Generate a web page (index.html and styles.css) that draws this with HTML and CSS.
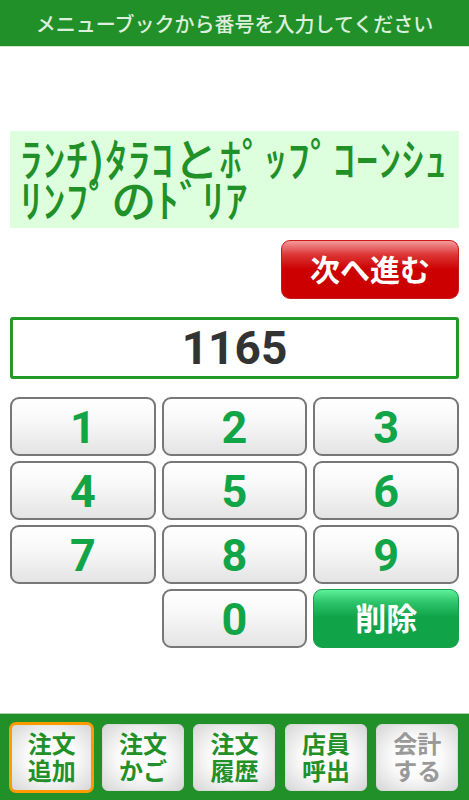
FILE: index.html
```html
<!DOCTYPE html>
<html lang="ja">
<head>
<meta charset="utf-8">
<link rel="stylesheet" href="styles.css">
</head>
<body>
<div class="app">
  <header class="header">メニューブックから番号を入力してください</header>
  <main class="main">
    <div class="item-name">ﾗﾝﾁ)ﾀﾗｺとﾎﾟｯﾌﾟｺｰﾝｼｭﾘﾝﾌﾟのﾄﾞﾘｱ</div>
    <div class="next-row"><button class="next-btn">次へ進む</button></div>
    <div class="number-box">1165</div>
    <div class="keypad">
      <button class="key">1</button>
      <button class="key">2</button>
      <button class="key">3</button>
      <button class="key">4</button>
      <button class="key">5</button>
      <button class="key">6</button>
      <button class="key">7</button>
      <button class="key">8</button>
      <button class="key">9</button>
      <span class="key-empty"></span>
      <button class="key">0</button>
      <button class="key key-delete">削除</button>
    </div>
  </main>
  <footer class="footer">
    <div class="tab-slot"><button class="tab tab-active"><span class="tab-line">注文</span><span class="tab-line">追加</span></button></div>
    <div class="tab-slot"><button class="tab"><span class="tab-line">注文</span><span class="tab-line">かご</span></button></div>
    <div class="tab-slot"><button class="tab"><span class="tab-line">注文</span><span class="tab-line">履歴</span></button></div>
    <div class="tab-slot"><button class="tab"><span class="tab-line">店員</span><span class="tab-line">呼出</span></button></div>
    <div class="tab-slot"><button class="tab tab-disabled"><span class="tab-line">会計</span><span class="tab-line">する</span></button></div>
  </footer>
</div>
</body>
</html>
```

FILE: styles.css
```css
* { box-sizing: border-box; }
html, body { margin: 0; padding: 0; }
body {
  font-family: "Noto Sans CJK JP", "Noto Sans", sans-serif;
  background: #fff;
  width: 469px;
  height: 800px;
  overflow: hidden;
}
button { font-family: inherit; padding: 0; margin: 0; cursor: pointer; }
.app {
  display: flex;
  flex-direction: column;
  height: 800px;
}
.header {
  height: 47px;
  background: #229028;
  border-bottom: 1px solid #cfe6cf;
  color: #dcefdc;
  font-size: 20px;
  font-weight: 500;
  display: flex;
  align-items: center;
  justify-content: center;
}
.main {
  flex: 1;
  padding: 84px 10px 0 10px;
}
.item-name {
  background: #ddffdd;
  color: #229028;
  font-size: 45px;
  font-weight: 500;
  letter-spacing: 0.4px;
  line-height: 41px;
  height: 97px;
  padding: 6px 4px 0 10px;
  word-break: break-all;
}
.next-row {
  display: flex;
  justify-content: flex-end;
  margin-top: 12px;
}
.next-btn {
  width: 178px;
  height: 59px;
  border: 1px solid #cc1a1a;
  border-radius: 9px;
  background: linear-gradient(to bottom, #f49a9a 0%, #dd3535 24%, #cc0000 50%, #cc0000 100%);
  color: #fff;
  font-size: 30px;
  font-weight: 700;
  line-height: 1;
  padding-bottom: 4px;
}
.number-box {
  margin-top: 18px;
  height: 62px;
  border: 3px solid #229a28;
  border-radius: 3px;
  display: flex;
  align-items: center;
  justify-content: center;
  font-family: Roboto, "Liberation Sans", sans-serif;
  font-weight: 700;
  font-size: 46px;
  color: #333;
}
.keypad {
  margin-top: 18px;
  display: grid;
  grid-template-columns: repeat(3, 1fr);
  grid-auto-rows: 59px;
  gap: 5px 6px;
}
.key {
  border: 2px solid #777;
  border-radius: 9px;
  background: linear-gradient(to bottom, #ffffff 0%, #f8f8f8 40%, #e4e4e4 100%);
  color: #11a548;
  font-family: Roboto, "Liberation Sans", sans-serif;
  font-weight: 700;
  font-size: 45px;
  line-height: 1;
  padding-top: 2px;
}
.key-delete {
  border: 1px solid #16a04a;
  background: linear-gradient(to bottom, #5ef09a 0%, #2cc36a 22%, #10a348 48%, #10a348 100%);
  color: #fff;
  font-family: "Noto Sans CJK JP", sans-serif;
  font-size: 31px;
  padding-top: 0;
  padding-bottom: 4px;
}
.footer {
  height: 87px;
  background: #229028;
  border-top: 1px solid #a8cfa8;
  display: grid;
  grid-template-columns: repeat(5, 1fr);
  align-items: center;
  padding: 0 6px;
}
.tab-slot {
  display: flex;
  justify-content: center;
  align-items: center;
}
.tab {
  width: 82px;
  height: 67px;
  border: 1px solid #d8d8d8;
  border-radius: 6px;
  background: radial-gradient(ellipse at center, #ffffff 0%, #fafafa 45%, #d6d6d6 100%);
  color: #229028;
  font-size: 24px;
  font-weight: 700;
  display: flex;
  flex-direction: column;
  align-items: center;
  justify-content: center;
  padding-bottom: 2px;
}
.tab-line {
  display: block;
  line-height: 27px;
  height: 27px;
}
.tab-active {
  width: 85px;
  height: 71px;
  border: 3px solid #ff9a00;
  border-radius: 7px;
}
.tab-disabled {
  color: #999;
}
```
